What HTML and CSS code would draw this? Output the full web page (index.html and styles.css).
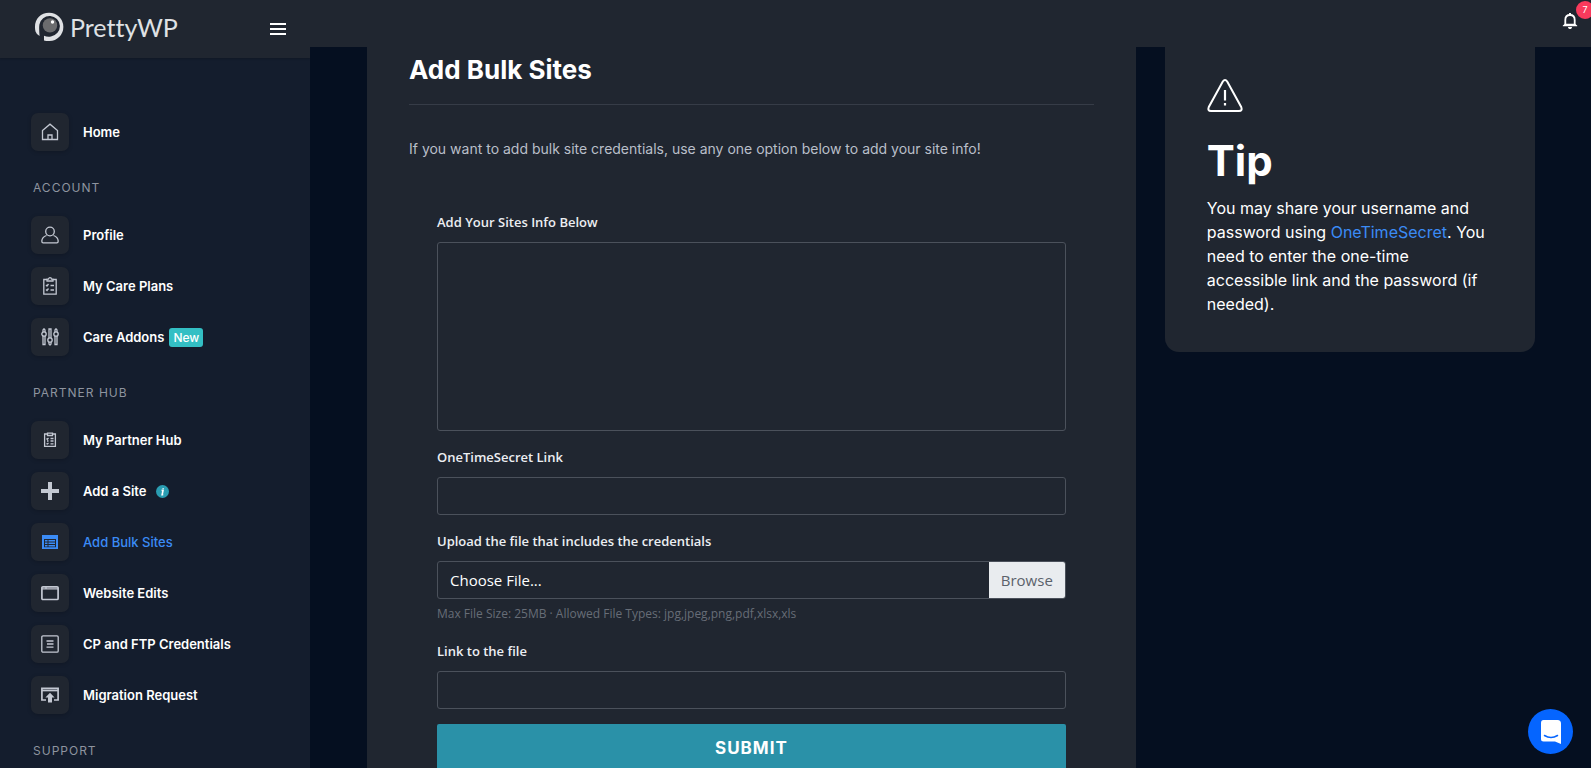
FILE: index.html
```html
<!DOCTYPE html>
<html lang="en">
<head>
<meta charset="utf-8">
<title>Add Bulk Sites - PrettyWP</title>
<link rel="stylesheet" href="styles.css">
</head>
<body>
<div class="app">
  <aside class="sidebar">
    <header class="brand-bar">
      <a class="brand" href="#">
        <svg width="30" height="30" viewBox="0 0 30 30" aria-hidden="true">
          <path d="M1.500 19.500C-1 9 5.500.8 15 .8a14 14 0 0 1 .5 28.200q-3 .2-5.500-.6v-4.600q3.500 1.300 7 .6A10.300 10.300 0 1 0 5.400 12.500q-.6 3.500.2 11.500Q2.500 22.500 1.500 19.500z" fill="#dfe1e4"/>
          <circle cx="16" cy="13.400" r="7.200" fill="#6b6c6e"/>
          <circle cx="18.500" cy="10" r="1.700" fill="#fff"/>
        </svg>
        <span>PrettyWP</span>
      </a>
      <button class="menu-btn" type="button" aria-label="Toggle menu"><i></i><i></i><i></i></button>
    </header>
    <nav class="nav">
      <a class="item" href="#"><span class="tile"><svg viewBox="0 0 18 18"><path d="M1.500 7.500 9 1.200l7.500 6.300v9h-15zM7 16.500v-4.500h4v4.500"/></svg></span>Home</a>
      <h2 class="group">ACCOUNT</h2>
      <a class="item" href="#"><span class="tile"><svg viewBox="0 0 18 18"><circle cx="9" cy="5.500" r="4.300"/><path d="M5.500 9.500C2.500 10.500 1 12.500.8 15q0 1.900 1.400 1.900h13.600q1.400 0 1.400-1.900c-.2-2.500-1.700-4.500-4.700-5.500"/></svg></span>Profile</a>
      <a class="item" href="#"><span class="tile"><svg viewBox="0 0 18 18"><path d="M6 2.500H2.800v14.700h12.400V2.500H12M6 4V2.200h1.500a1.500 1.500 0 0 1 3 0H12V4zM5 8l1 1 1.500-2M9.500 8.500H13M5 12.500l1 1 1.500-2M9.500 13H13"/></svg></span>My Care Plans</a>
      <a class="item" href="#"><span class="tile"><svg viewBox="0 0 18 18"><path d="M2 4V2q1-2 2 0v2M2 8v8.500h2V8M8 10V1h2v9M8 14v2q1 2 2 0v-2M14 4V2q1-2 2 0v2M14 8v8.500h2V8"/><circle cx="3" cy="6" r="2.200"/><circle cx="9" cy="12" r="2.200"/><circle cx="15" cy="6" r="2.200"/></svg></span>Care Addons<em class="new">New</em></a>
      <h2 class="group">PARTNER HUB</h2>
      <a class="item" href="#"><span class="tile"><svg viewBox="0 0 18 18"><path d="M6.500 3H3.600v12.400h10.800V3h-2.900M6.500 2.200h5v2.300h-5z"/><path d="m5.500 7.500.8.800L7.500 7M9.500 7.500h3M6 10h1.500M9.500 10h3M5.500 12.500l.8.500L7.500 12M9.500 12.800h3"/></svg></span>My Partner Hub</a>
      <a class="item" href="#"><span class="tile"><svg viewBox="0 0 18 18"><path class="solid" d="M7 0h4v7h7v4h-7v7H7v-7H0V7h7z"/></svg></span>Add a Site<svg class="info" viewBox="0 0 14 14" aria-label="Information"><circle cx="7" cy="7" r="7" fill="#2a9db2"/><path d="M6 5.800h1.600L6.600 10.500h1.200M7.700 3.200v.8" fill="none" stroke="#fff" stroke-width="1.700"/></svg></a>
      <a class="item active" href="#" aria-current="page"><span class="tile"><svg viewBox="0 0 18 18"><path class="solid" fill-rule="evenodd" d="M1 2h16v14H1zM3 6v8.200h12V6z"/><path class="solid" d="M4 7h2.500v1.500H4zM7.500 7H14v1.500H7.500zM4 9.500h2.500V11H4zM7.500 9.500H14V11H7.500zM4 12h2.500v1.500H4zM7.500 12H14v1.500H7.500z"/></svg></span>Add Bulk Sites</a>
      <a class="item" href="#"><span class="tile"><svg viewBox="0 0 18 18"><rect x=".9" y="2.800" width="16.200" height="12.700" rx="1" stroke-width="1.700"/><path d="M1 4.900h16M5 3v2" stroke-width="1.300"/></svg></span>Website Edits</a>
      <a class="item" href="#"><span class="tile"><svg viewBox="0 0 18 18"><rect x=".8" y=".8" width="16.400" height="16.400" rx="1.200"/><path d="M6 6h6.500M6 9h6.500M6 12.200h6.500M5 6h.5M5 12.200h.5"/></svg></span>CP and FTP Credentials</a>
      <a class="item" href="#"><span class="tile"><svg viewBox="0 0 18 18"><path d="M5 14H.9V2.400h16.200V14H13" stroke-width="1.700"/><path d="M1 4.500h16" stroke-width="1.700"/><path class="solid" d="m9 6.800 4.600 4.700H11v5H7v-5H4.400z"/></svg></span>Migration Request</a>
      <h2 class="group">SUPPORT</h2>
    </nav>
  </aside>

  <div class="content">
    <header class="topbar">
      <button class="bell" type="button" aria-label="Notifications">
        <svg width="16" height="18" viewBox="0 0 16 18" aria-hidden="true"><path d="M3.300 13V8c0-3 1.700-5 4.700-5s4.700 2 4.700 5v5" fill="none" stroke="#fff" stroke-width="1.800"/><path d="M7 1h2v2H7zM.8 13.600 3 11.800h10l2.200 1.800v.6H.8zM6 15h4c0 1.500-1 2-2 2s-2-.5-2-2z" fill="#fff"/></svg>
        <span class="count">7</span>
      </button>
    </header>
    <main class="columns">
      <section class="card form-card">
        <h1>Add Bulk Sites</h1>
        <p class="intro">If you want to add bulk site credentials, use any one option below to add your site info!</p>
        <form class="form">
          <label class="label" for="sites">Add Your Sites Info Below</label>
          <textarea class="field area" id="sites"></textarea>
          <label class="label" for="secret">OneTimeSecret Link</label>
          <input class="field" id="secret" type="text">
          <label class="label" for="upload">Upload the file that includes the credentials</label>
          <div class="field file">
            <span class="file-name">Choose File...</span>
            <span class="browse">Browse</span>
            <input class="file-input" id="upload" type="file">
          </div>
          <small class="help">Max File Size: 25MB · Allowed File Types: jpg,jpeg,png,pdf,xlsx,xls</small>
          <label class="label" for="link">Link to the file</label>
          <input class="field last" id="link" type="text">
          <button class="submit" type="submit">SUBMIT</button>
        </form>
      </section>
      <aside class="card tip">
        <svg width="36" height="34" viewBox="0 0 36 34" aria-hidden="true"><path d="M15.800 2.500q2.200-3 4.400 0l14 25.500q1.500 4-2.200 4H4q-3.700 0-2.200-4z" fill="none" stroke="#fff" stroke-width="2"/><path d="M18 11v10.500M18 24v2.600" stroke="#fff" stroke-width="2.200"/></svg>
        <h2>Tip</h2>
        <p>You may share your username and password using <a href="#">OneTimeSecret</a>. You need to enter the one-time accessible link and the password (if needed).</p>
      </aside>
    </main>
  </div>
</div>
<button class="chat" type="button" aria-label="Open chat">
  <svg width="22" height="26" viewBox="0 0 22 26" aria-hidden="true"><path d="M3.500 1h14Q21 1 21 4.500V25l-6-2.500H3.500Q1 22.500 1 20V4q0-3 2.500-3z" fill="#fff"/><path d="M4.500 16.500q6.500 4 13 0" fill="none" stroke="#0565ff" stroke-width="1.500" stroke-linecap="round"/></svg>
</button>
</body>
</html>
```
FILE: styles.css
```css
* { box-sizing: border-box; }
body {
  margin: 0;
  background: #050f20;
  color: #fff;
  font-family: Inter, "Liberation Sans", sans-serif;
}
button { border: 0; padding: 0; background: none; color: inherit; font: inherit; cursor: pointer; }
a { color: #3b8bf5; text-decoration: none; }

.app { display: grid; grid-template-columns: 310px 1fr; height: 100vh; overflow: hidden; }

.sidebar { background: #141d2d; overflow: hidden; }
.brand-bar {
  display: flex;
  align-items: center;
  justify-content: space-between;
  height: 58px;
  padding: 0 24px 4px 34px;
  background: #202630;
  box-shadow: 0 1px 2px rgba(0, 0, 0, 0.2);
}
.brand { display: flex; align-items: center; gap: 6px; color: #dfe1e4; font: 25px/32px Lato, sans-serif; font-variant-ligatures: none; }
.menu-btn { display: grid; gap: 3px; width: 16px; margin-top: 4px; }
.menu-btn i { height: 2px; background: #fff; }

.nav { display: flex; flex-direction: column; gap: 13px; padding: 55px 31px 0; }
.item { display: flex; align-items: center; color: #fff; font-size: 13px; font-weight: 600; line-height: 20px; }
.tile {
  display: grid;
  place-items: center;
  width: 38px;
  height: 38px;
  margin-right: 14px;
  border-radius: 7px;
  background: #202630;
  box-shadow: 0 1px 4px rgba(0, 0, 0, 0.2);
}
.tile svg { width: 18px; height: 18px; fill: none; stroke: #c3c8d2; stroke-width: 1.3; }
.tile .solid { fill: #c3c8d2; stroke: none; }
.active { color: #3b8bf5; font-weight: 500; }
.active .tile .solid { fill: #3b8bf5; }
.group {
  margin: 16px 2px 8px;
  color: #8e949f;
  font-size: 12px;
  font-weight: 400;
  line-height: 15px;
  letter-spacing: 1px;
}
.new {
  margin-left: 5px;
  padding: 0 4px;
  border-radius: 3px;
  background: #33bfc4;
  font-size: 12px;
  font-style: normal;
  font-weight: 500;
  line-height: 19px;
}
.info { width: 13px; height: 13px; margin-left: 9px; }

.content { display: flex; flex-direction: column; min-width: 0; overflow: hidden; }
.topbar { flex: none; display: flex; justify-content: flex-end; height: 47px; padding: 12px 13px 0; background: #202630; }
.bell { position: relative; width: 16px; height: 18px; }
.count {
  position: absolute;
  top: -11px;
  left: 14px;
  width: 18px;
  border-radius: 9px;
  background: #f93a5c;
  font-size: 9px;
  line-height: 18px;
  text-align: center;
}

.columns {
  display: grid;
  grid-template-columns: 27fr 13fr;
  align-items: start;
  gap: 29px;
  padding: 0 56px 0 57px;
}
.card { background: #202630; }
.form-card { padding: 2px 42px 40px; }
h1 { margin: 0; padding: 4px 0 17px; border-bottom: 1px solid #363c47; font-size: 26px; font-weight: 700; line-height: 34px; }
.intro { margin: 33px 0 52px; color: #b9bfc9; font-size: 14px; line-height: 22px; }

.form { display: flex; flex-direction: column; padding: 0 28px; font-family: "Open Sans", sans-serif; }
.label { margin-bottom: 10px; color: #eceef2; font-size: 13px; font-weight: 600; line-height: 20px; }
.field {
  width: 100%;
  height: 38px;
  margin: 0 0 16px;
  padding: 0 12px;
  border: 1px solid #4b515b;
  border-radius: 3px;
  background: transparent;
  color: #fff;
  font: inherit;
}
.area { height: 189px; resize: none; }
.file { position: relative; display: flex; align-items: center; justify-content: space-between; margin-bottom: 5px; padding-right: 0; font-size: 15px; }
.file-input { position: absolute; inset: 0; width: 100%; opacity: 0; cursor: pointer; }
.browse { padding: 0 12px; border-radius: 0 2px 2px 0; background: #e9ecef; color: #5b626b; line-height: 36px; }
.help { margin-bottom: 17px; color: #676d77; font-size: 12px; line-height: 20px; }
.last { margin-bottom: 15px; }
.submit { height: 48px; border-radius: 2px; background: #2a91a8; font-family: Inter, sans-serif; font-size: 17px; font-weight: 700; letter-spacing: 1px; }

.tip { padding: 32px 42px 36px; border-radius: 0 0 14px 14px; }
.tip svg { display: block; }
.tip h2 { margin: 22px 0 9px; font-size: 42px; font-weight: 700; line-height: 52px; }
.tip p { margin: 0; font-size: 16px; line-height: 24px; }

.chat {
  position: fixed;
  right: 18px;
  bottom: 14px;
  display: grid;
  place-items: center;
  width: 45px;
  height: 45px;
  border-radius: 50%;
  background: #0565ff;
}
```
